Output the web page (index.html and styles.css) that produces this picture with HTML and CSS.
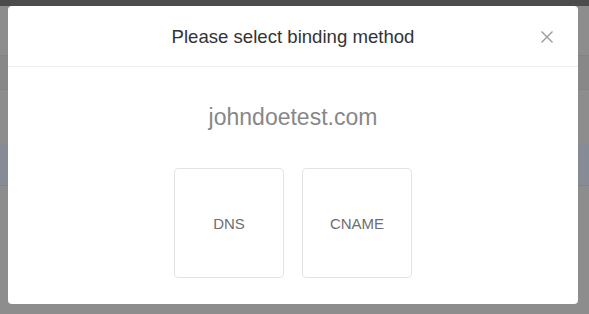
FILE: index.html
```html
<!DOCTYPE html>
<html>
<head>
<meta charset="utf-8">
<link rel="stylesheet" href="styles.css">
</head>
<body>
<div class="page">
  <div class="topbar"></div>
  <div class="row row-a"></div>
  <div class="row row-b"></div>
</div>
<div class="modal">
  <div class="modal-header">
    <div class="title">Please select binding method</div>
    <button class="close" aria-label="Close">
      <svg width="12" height="12" viewBox="0 0 12 12"><path d="M0.5 0.5 L11.5 11.5 M11.5 0.5 L0.5 11.5" stroke="#9a9a9a" stroke-width="1.4" fill="none"/></svg>
    </button>
  </div>
  <div class="modal-body">
    <div class="domain">johndoetest.com</div>
    <div class="options">
      <div class="option">DNS</div>
      <div class="option">CNAME</div>
    </div>
  </div>
</div>
</body>
</html>
```
FILE: styles.css
```css
html, body {
  margin: 0;
  padding: 0;
}
body {
  width: 589px;
  height: 314px;
  overflow: hidden;
  background: #8d8d8d;
  font-family: "Liberation Sans", Arial, sans-serif;
  position: relative;
}
.page {
  display: flex;
  flex-direction: column;
}
.topbar {
  height: 6px;
  background: #4c4c4c;
}
.row-a {
  margin-top: 49px;
  height: 33px;
  background: #888888;
  border-top: 1px solid #838383;
  border-bottom: 1px solid #838383;
}
.row-b {
  margin-top: 53px;
  height: 42px;
  background: #868b95;
  border-bottom: 1px solid #7f838b;
}
.modal {
  position: absolute;
  left: 8px;
  top: 6px;
  width: 570px;
  height: 298px;
  background: #fff;
  border-radius: 4px;
  display: flex;
  flex-direction: column;
}
.modal-header {
  height: 60px;
  border-bottom: 1px solid #efefef;
  display: flex;
  align-items: center;
  justify-content: center;
  position: relative;
}
.title {
  font-size: 18.6px;
  color: #333;
  padding-top: 1px;
}
.close {
  position: absolute;
  right: 25px;
  top: 25px;
  width: 12px;
  height: 12px;
  padding: 0;
  border: 0;
  background: none;
  display: flex;
}
.modal-body {
  display: flex;
  flex-direction: column;
  align-items: center;
  padding-top: 35px;
}
.domain {
  font-size: 23px;
  line-height: 30px;
  color: #878787;
}
.options {
  margin-top: 36px;
  display: flex;
  gap: 18px;
}
.option {
  width: 108px;
  height: 108px;
  border: 1px solid #e3e3e3;
  border-radius: 4px;
  display: flex;
  align-items: center;
  justify-content: center;
  font-size: 15px;
  color: #6e6e6e;
}
```
